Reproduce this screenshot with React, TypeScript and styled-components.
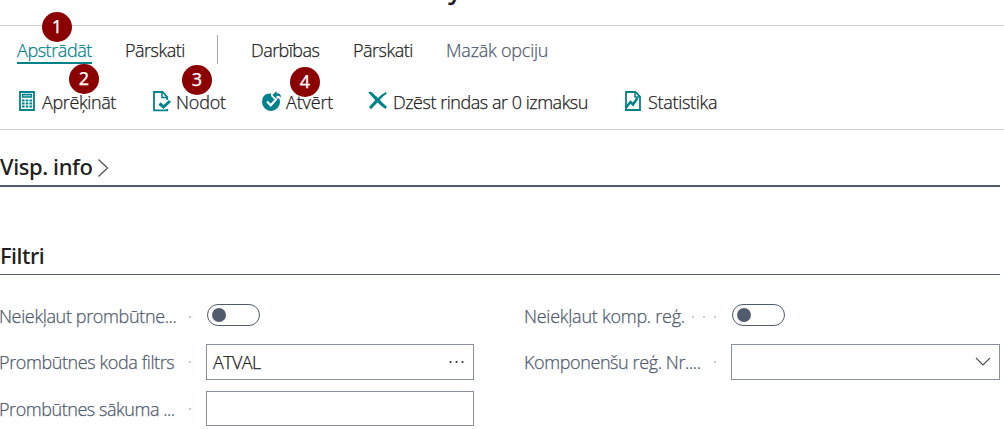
import React from "react";
import styled, { createGlobalStyle } from "styled-components";

const teal = "#00828a";
const slate = "#505c6d";

const Global = createGlobalStyle`
  * { box-sizing: border-box; }
  body { margin: 0; background: #fff; overflow: hidden; }
`;

const Page = styled.main`
  width: 1004px;
  height: 429px;
  overflow: hidden;
  color: #212121;
  font: 300 18px/24px "Open Sans", "Noto Sans", sans-serif;
  -webkit-text-stroke: 0.25px currentColor;
`;

const TitleStrip = styled.header`
  height: 26px;
  padding-left: 448px;
  border-bottom: 1px solid #d2d2d2;
  overflow: hidden;
`;

const Title = styled.h1`
  margin: -27px 0 0;
  font: 500 26px/32px "Noto Sans", sans-serif;
`;

const Ribbon = styled.section`
  height: 104px;
  border-bottom: 1px solid #d2d2d2;
`;

const Row = styled.nav`
  display: flex;
  padding-left: 17px;
`;

const TabRow = styled(Row)`
  height: 51px;
  padding-top: 9px;
`;

const ActionRow = styled(Row)`
  height: 48px;
  padding: 14px 0 0 19px;
`;

const Tracked = styled.span<{ $track?: number }>`
  letter-spacing: ${(p) => p.$track ?? -0.55}px;
  white-space: nowrap;
`;

const Tab = styled.div<{ $w: number; $active?: boolean; $muted?: boolean }>`
  position: relative;
  flex: none;
  width: ${(p) => p.$w}px;
  height: 29px;
  padding-top: 3px;
  color: ${(p) => (p.$active ? teal : p.$muted ? slate : "#212121")};
`;

const TabLabel = styled(Tracked)<{ $active?: boolean }>`
  display: inline-block;
  height: 26px;
  border-bottom: ${(p) => (p.$active ? `2px solid ${teal}` : "none")};
`;

const Separator = styled.div`
  width: 1px;
  height: 29px;
  margin-right: 33px;
  background: #a5a8ae;
`;

const Action = styled.div<{ $w: number; $gap: number }>`
  position: relative;
  display: flex;
  flex: none;
  gap: ${(p) => p.$gap}px;
  width: ${(p) => p.$w}px;
  height: 24px;
`;

const ActionLabel = styled(Tracked)`
  margin-top: -1px;
`;

const Glyph = styled.svg`
  display: block;
  flex: none;
`;

const Badge = styled.b<{ $x: number; $y: number }>`
  position: absolute;
  left: ${(p) => p.$x}px;
  top: ${(p) => p.$y}px;
  width: 30px;
  height: 30px;
  border-radius: 50%;
  background: #8b0000;
  color: #fff;
  font: 400 18px/29px "Noto Sans", sans-serif;
  text-align: center;
  z-index: 1;
`;

const GroupHead = styled.h2<{ $top: number; $line: number }>`
  display: flex;
  align-items: flex-start;
  gap: 4px;
  width: 1000px;
  height: ${(p) => 33 + p.$line}px;
  margin: ${(p) => p.$top}px 0 0;
  border-bottom: ${(p) => p.$line}px solid ${slate};
  font: 500 22px/28px "Noto Sans", sans-serif;
  -webkit-text-stroke: 0;
`;

const Chevron = styled(Glyph)`
  margin-top: 6px;
`;

const Fields = styled.section`
  display: grid;
  grid-template-columns: 474px 475px;
  column-gap: 51px;
  padding-top: 22px;
`;

const Column = styled.div`
  display: flex;
  flex-direction: column;
`;

const Field = styled.div<{ $h: number }>`
  display: flex;
  align-items: center;
  height: ${(p) => p.$h}px;
  color: ${slate};
`;

const Caption = styled.div`
  display: flex;
  align-items: center;
  flex: none;
  width: 206px;
  padding-right: 15px;
  justify-content: space-between;
`;

const FieldLabel = styled(Tracked)<{ $drop?: number }>`
  margin: ${(p) => p.$drop ?? 0}px 0 0 -1px;
`;

const Leader = styled.span`
  display: flex;
  gap: 8px;
  i { width: 2px; height: 2px; background: #c8cbd0; }
  i + i { margin-left: 1px; }
`;

const Toggle = styled.div`
  width: 53px;
  height: 22px;
  margin: -4px 0 0 1px;
  padding: 3px 4px;
  border: 1px solid ${slate};
  border-radius: 11px;
  &::before {
    content: "";
    display: block;
    width: 14px;
    height: 14px;
    border-radius: 50%;
    background: ${slate};
  }
`;

const Input = styled.div<{ $w?: number; $h?: number }>`
  display: flex;
  justify-content: space-between;
  align-items: center;
  flex: none;
  width: ${(p) => p.$w ?? 268}px;
  height: ${(p) => p.$h ?? 36}px;
  padding: 0 8px 0 6px;
  border: 1px solid #8a919c;
  color: #212121;
`;

const Calculator = () => (
  <Glyph width="16" height="20" viewBox="0 0 16 20">
    <path d="M1 1h14v18H1z" fill="#fff" stroke={teal} strokeWidth="1.8" />
    <path d="M3.500 3.500h9v2.500h-9z" fill="#b8dcde" stroke={teal} strokeWidth="1.300" />
    <path d="M3 9.500h10M3 12.500h10M3 15.500h10" stroke={teal} strokeWidth="2.100" strokeDasharray="2.600 1.100" />
  </Glyph>
);

const Post = () => (
  <Glyph width="19" height="21" viewBox="0 0 19 21">
    <path d="M14.200 9V6L9.500 1H1v18.300h13.200V18" fill="none" stroke={teal} strokeWidth="1.800" />
    <path d="M9 1v5.500h5" fill="none" stroke={teal} strokeWidth="1.500" />
    <path d="M6.500 12.500l4 3.500 6.500-6" fill="none" stroke={teal} strokeWidth="3" />
  </Glyph>
);

const Reopen = () => (
  <Glyph width="20" height="20" viewBox="0 0 20 20">
    <path d="M9 2.500Q0 2 0 11a9 9 0 0 0 18 0q0-2-1-4l-4 2-2-2-2-2z" fill={teal} />
    <path d="M5 10.500l3.700 3.800L14.500 8" fill="none" stroke="#fff" strokeWidth="2.200" />
    <path d="M10.500 4L14.500 0v2.300q4.500-.3 4.500 4.200-1.500-2-4.500-1.600V8z" fill={teal} />
  </Glyph>
);

const Delete = () => (
  <Glyph width="20" height="19" viewBox="0 0 20 19">
    <path d="M.3 1.500Q2.500-.3 4.500 2L10 7Q14 3 17.800 1l1 1.500q-3.800 2.700-7 6.300 3.500 4 7.200 7L17.500 18q-4.500-3-8-6.500Q6 15 3 18.200L1 16Q4 12.500 7.200 9.200 4 5.500.3 1.500z" fill={teal} />
  </Glyph>
);

const Stats = () => (
  <Glyph width="16" height="20" viewBox="0 0 16 20">
    <path d="M1 1h9.500L15 5.500V19H1z" fill="none" stroke={teal} strokeWidth="1.800" />
    <path d="M10 1v5h5" fill="none" stroke={teal} strokeWidth="1.500" />
    <path d="M1 16.500l4.500-5.500 2.500 2.500L12.500 7" fill="none" stroke={teal} strokeWidth="2.500" />
  </Glyph>
);

const Dots = ({ n = 1 }: { n?: number }) => (
  <Leader>{Array.from({ length: n }, (_, k) => <i key={k} />)}</Leader>
);

export default function App() {
  return (
    <Page>
      <Global />
      <TitleStrip><Title>y</Title></TitleStrip>
      <Ribbon>
        <TabRow>
          <Tab $w={108} $active>
            <TabLabel $active $track={-0.43}>Apstrādāt</TabLabel>
            <Badge $x={25} $y={-23}>1</Badge>
          </Tab>
          <Tab $w={92}><TabLabel $track={-0.5}>Pārskati</TabLabel></Tab>
          <Separator />
          <Tab $w={102}><TabLabel $track={-0.55}>Darbības</TabLabel></Tab>
          <Tab $w={93}><TabLabel $track={-0.5}>Pārskati</TabLabel></Tab>
          <Tab $w={110} $muted><TabLabel $track={-0.22}>Mazāk opciju</TabLabel></Tab>
        </TabRow>
        <ActionRow>
          <Action $w={134} $gap={7}>
            <Calculator /><ActionLabel $track={-0.38}>Aprēķināt</ActionLabel>
            <Badge $x={50} $y={-27}>2</Badge>
          </Action>
          <Action $w={109} $gap={4}>
            <Post /><ActionLabel $track={-0.2}>Nodot</ActionLabel>
            <Badge $x={29} $y={-26}>3</Badge>
          </Action>
          <Action $w={106} $gap={4}>
            <Reopen /><ActionLabel $track={-0.15}>Atvērt</ActionLabel>
            <Badge $x={28} $y={-24}>4</Badge>
          </Action>
          <Action $w={257} $gap={5}>
            <Delete /><ActionLabel $track={-0.47}>Dzēst rindas ar 0 izmaksu</ActionLabel>
          </Action>
          <Action $w={100} $gap={7}>
            <Stats /><ActionLabel $track={-0.3}>Statistika</ActionLabel>
          </Action>
        </ActionRow>
      </Ribbon>
      <GroupHead $top={22} $line={2}>
        <Tracked $track={-0.4}>Visp. info</Tracked>
        <Chevron width="12" height="20" viewBox="0 0 12 20">
          <path d="M1.500 1.500l9 8.500-9 8.500" fill="none" stroke="#505050" strokeWidth="1.200" />
        </Chevron>
      </GroupHead>
      <GroupHead $top={54} $line={1}><Tracked $track={-0.5}>Filtri</Tracked></GroupHead>
      <Fields>
        <Column>
          <Field $h={40}>
            <Caption><FieldLabel $drop={-2} $track={-0.36}>Neiekļaut prombūtne...</FieldLabel><Dots /></Caption>
            <Toggle />
          </Field>
          <Field $h={50}>
            <Caption><FieldLabel $track={-0.4}>Prombūtnes koda filtrs</FieldLabel><Dots /></Caption>
            <Input>
              <Tracked $track={-0.6}>ATVAL</Tracked>
              <Glyph width="16" height="4" viewBox="0 0 16 4" fill="#333">
                <circle cx="1.500" cy="2" r="1.100" /><circle cx="7.500" cy="2" r="1.100" /><circle cx="13.500" cy="2" r="1.100" />
              </Glyph>
            </Input>
          </Field>
          <Field $h={43}>
            <Caption><FieldLabel $drop={1} $track={-0.45}>Prombūtnes sākuma ...</FieldLabel><Dots /></Caption>
            <Input $h={35} />
          </Field>
        </Column>
        <Column>
          <Field $h={40}>
            <Caption><FieldLabel $drop={-2} $track={-0.25}>Neiekļaut komp. reģ.</FieldLabel><Dots n={3} /></Caption>
            <Toggle />
          </Field>
          <Field $h={50}>
            <Caption><FieldLabel $track={-0.4}>Komponenšu reģ. Nr....</FieldLabel><Dots /></Caption>
            <Input $w={269}>
              <span />
              <Glyph width="16" height="10" viewBox="0 0 16 10">
                <path d="M1 1l7 7 7-7" fill="none" stroke="#505050" strokeWidth="1.100" />
              </Glyph>
            </Input>
          </Field>
        </Column>
      </Fields>
    </Page>
  );
}
